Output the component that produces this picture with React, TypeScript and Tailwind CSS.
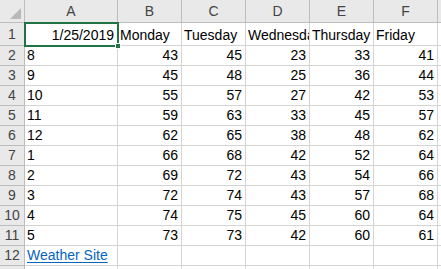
const cols = ["A", "B", "C", "D", "E", "F", "G"];

const days = ["Monday", "Tuesday", "Wednesday", "Thursday", "Friday"];

// hour label + temps for Mon..Fri
const rows: [string, number[]][] = [
  ["8", [43, 45, 23, 33, 41]],
  ["9", [45, 48, 25, 36, 44]],
  ["10", [55, 57, 27, 42, 53]],
  ["11", [59, 63, 33, 45, 57]],
  ["12", [62, 65, 38, 48, 62]],
  ["1", [66, 68, 42, 52, 64]],
  ["2", [69, 72, 43, 54, 66]],
  ["3", [72, 74, 43, 57, 68]],
  ["4", [74, 75, 45, 60, 64]],
  ["5", [73, 73, 42, 60, 61]],
];

const cell =
  "border-r border-b border-[#d4d4d4] px-[2px] overflow-hidden whitespace-nowrap flex items-end pb-[1px] leading-[18px]";
const head =
  "border-r border-b border-[#bdbdbd] bg-[#e9e9e9] text-[#444444] flex items-center justify-center";

function HeaderRow() {
  return (
    <>
      <div className={`${head} relative`}>
        <svg width="11" height="11" viewBox="0 0 11 11" className="absolute right-[3px] bottom-[3px]">
          <polygon points="11,0 11,11 0,11" fill="#b8b8b8" />
        </svg>
      </div>
      {cols.map((c) => (
        <div
          key={c}
          className={`${head} ${c === "A" ? "bg-[#d6d6d6] text-[#1d6b3e]" : ""} ${
            c === "G" ? "border-r-0" : ""
          }`}
        >
          {c === "G" ? "" : c}
        </div>
      ))}
    </>
  );
}

function RowHead({ n, active }: { n?: number; active?: boolean }) {
  return (
    <div className={`${head} ${active ? "bg-[#d6d6d6] text-[#1d6b3e]" : ""}`}>{n}</div>
  );
}

export default function App() {
  return (
    <div
      className="w-[441px] h-[269px] overflow-hidden bg-white text-[14px] text-black relative"
      style={{ fontFamily: '"Liberation Sans", Arial, sans-serif' }}
    >
      <div className="grid grid-cols-[25px_93px_64px_64px_64px_64px_64px_64px] grid-rows-[23px_23px_repeat(12,20px)]">
        <HeaderRow />

        <RowHead n={1} active />
        <div className={`${cell} justify-end px-[3px]`}>1/25/2019</div>
        {days.map((d) => (
          <div key={d} className={cell}>
            {d}
          </div>
        ))}
        <div className={cell} />

        {rows.map(([label, vals], i) => (
          <div key={i} className="contents">
            <RowHead n={i + 2} />
            <div className={cell}>{label}</div>
            {vals.map((v, j) => (
              <div key={j} className={`${cell} justify-end px-[3px]`}>
                {v}
              </div>
            ))}
            <div className={cell} />
          </div>
        ))}

        <RowHead n={12} />
        <div className={cell}>
          <a href="#" className="text-[#0563c1] underline underline-offset-[2px]">
            Weather Site
          </a>
        </div>
        {[0, 1, 2, 3, 4, 5].map((k) => (
          <div key={k} className={cell} />
        ))}

        <RowHead />
        {[0, 1, 2, 3, 4, 5, 6].map((k) => (
          <div key={k} className={cell} />
        ))}
      </div>

      {/* active cell A1 */}
      <div className="absolute left-[24px] top-[22px] w-[95px] h-[25px] border-2 border-[#217346] pointer-events-none" />
      <div className="absolute left-[115px] top-[43px] w-[6px] h-[6px] bg-[#217346] border border-white pointer-events-none" />
    </div>
  );
}
